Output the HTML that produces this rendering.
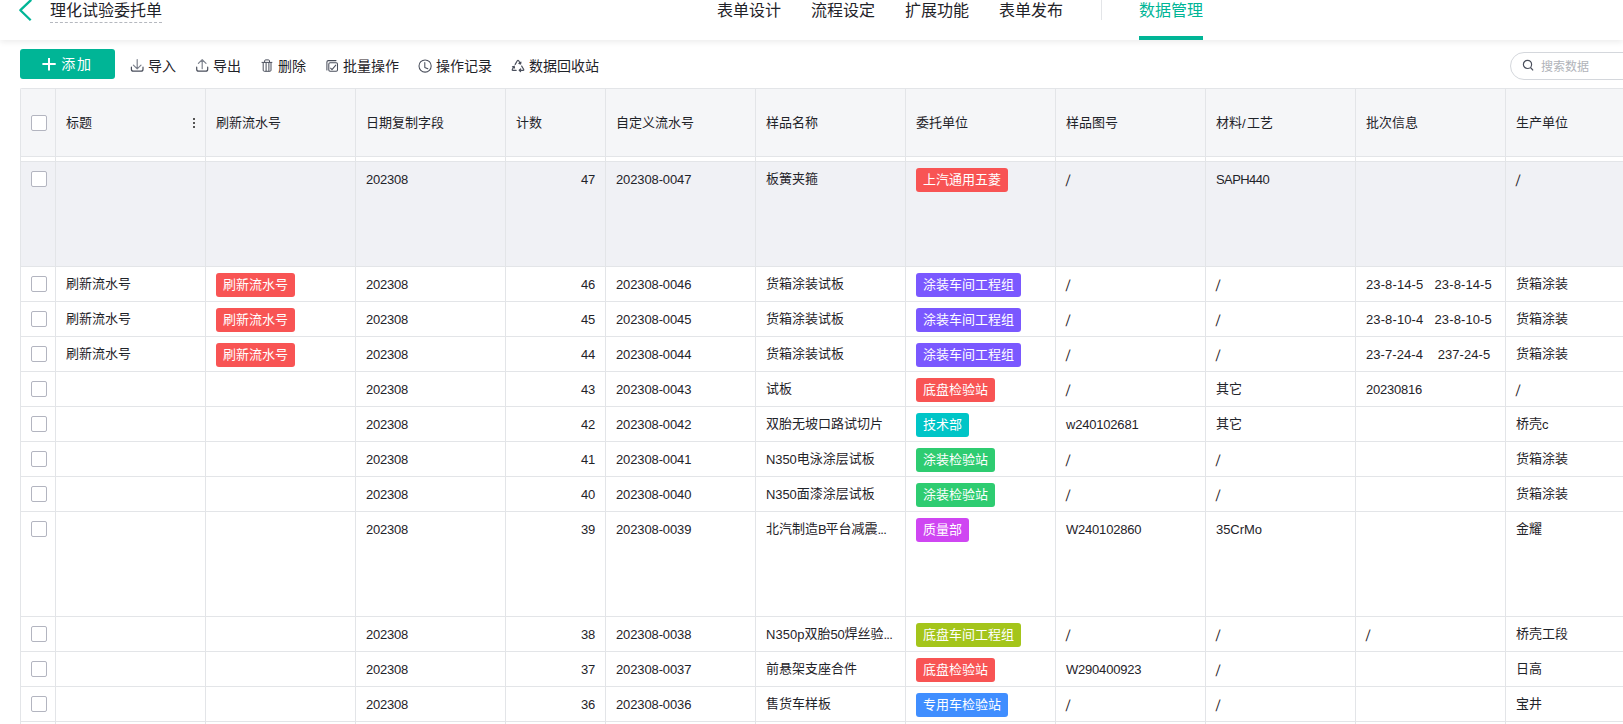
<!DOCTYPE html>
<html lang="zh-CN">
<head>
<meta charset="utf-8">
<title>理化试验委托单</title>
<style>
*{box-sizing:border-box;margin:0;padding:0}
html,body{width:1623px;height:724px;overflow:hidden;background:#fff}
body{font-family:"Liberation Sans","Noto Sans CJK SC",sans-serif;color:#1f2329;font-size:13px;position:relative}
.top{position:absolute;left:0;top:0;width:1623px;height:40px;background:#fff;box-shadow:0 2px 6px rgba(0,0,0,.08);z-index:5}
.back{position:absolute;left:18px;top:0;width:16px;height:24px}
.title{position:absolute;left:50px;top:-1px;font-size:16px;line-height:24px;height:24px;color:#1f2329;border-bottom:1px dashed #b5b8bf;white-space:nowrap}
.tabs{position:absolute;left:0;top:0}
.tab{position:absolute;top:-1px;font-size:16px;line-height:24px;white-space:nowrap;color:#1f2329}
.tab.act{color:#00b596}
.tabline{position:absolute;left:1139px;top:36px;width:64px;height:4px;background:#00b596}
.vdiv{position:absolute;left:1101px;top:0;width:1px;height:20px;background:#e3e5e8}
.bar{position:absolute;left:0;top:40px;width:1623px;height:48px}
.add{position:absolute;left:20px;top:9px;width:95px;height:30px;background:#00b596;border-radius:3px;color:#fff;font-size:14px;line-height:30px}
.add span{position:absolute;left:41.3px;top:0;font-size:14px;letter-spacing:1.6px}
.add svg{position:absolute;left:22px;top:8px;overflow:visible}
.tb{position:absolute;top:16px;height:20px;line-height:20px;font-size:14px;color:#1f2329;white-space:nowrap}
.tb svg{position:absolute;left:0;top:2px;overflow:visible}
.tb span{position:absolute;left:18px;top:0}
.search{position:absolute;left:1510px;top:12px;width:140px;height:28px;border:1px solid #d4d7dc;border-radius:14px;background:#fff}
.search svg{position:absolute;left:11px;top:6px}
.search span{position:absolute;left:30px;top:1px;line-height:26px;font-size:12px;color:#b0b3b9;white-space:nowrap}
.tblwrap{position:absolute;left:20px;top:88px;width:1620px;height:640px;border-left:1px solid #e3e5e8;border-top:1px solid #e3e5e8;overflow:hidden;border-radius:2px 0 0 0}
.r{display:flex;height:35px;border-bottom:1px solid #e3e5e8;background:#fff;white-space:nowrap}
.r.tall{height:105px}
.r.hov{background:#f0f1f5}
.r.hd{height:68px;background:#f5f6f8;color:#1f2329}
.gap{height:5px;display:flex;border-bottom:1px solid #e3e5e8;background:#fff}
.c{height:100%;border-right:1px solid #e3e5e8;padding:0 10px;line-height:34px;overflow:hidden;flex:none;position:relative}
.hd .c{line-height:67px}
.ck{width:35px;padding:0}
.w150{width:150px}
.w100{width:100px}
.num{text-align:right}
.l{position:relative;top:1px}
.sl{display:inline-block;line-height:15px;transform:skewX(-7deg) scaleY(1.23);transform-origin:0 2px;left:1px}
.cb{position:absolute;left:10px;top:9px;width:16px;height:16px;border:1px solid #b3b5c0;border-radius:2px;background:#fff}
.hd .cb{top:26px}
.tag{display:inline-block;height:24px;line-height:24px;padding:0 7px;border-radius:3px;color:#fff;font-size:13px;vertical-align:top;margin-top:6px}
.red{background:#f85454}.purple{background:#7a58ff}.cyan{background:#00c5c7}.green{background:#2ecc71}.magenta{background:#cf46f2}.lime{background:#a4c51b}.blue{background:#408eff}
.dots{position:absolute;right:9px;top:28.5px;width:3px;height:11px}
.dots b{display:block;width:2px;height:2px;background:#555;margin-bottom:2px}
</style>
</head>
<body>
<div class="top">
  <svg class="back" viewBox="0 0 16 24"><path d="M13.2 -0.2 L2.4 10.2 L12.7 20.3" fill="none" stroke="#00b596" stroke-width="2.3" stroke-linejoin="round"/></svg>
  <div class="title">理化试验委托单</div>
  <div class="tab" style="left:717px">表单设计</div>
  <div class="tab" style="left:811px">流程设定</div>
  <div class="tab" style="left:905px">扩展功能</div>
  <div class="tab" style="left:999px">表单发布</div>
  <div class="vdiv"></div>
  <div class="tab act" style="left:1139px">数据管理</div>
  <div class="tabline"></div>
</div>
<div class="bar">
  <div class="add"><svg width="14" height="14" viewBox="0 0 14 14"><path d="M7 1v12.6M0.4 7h13.3" stroke="#fff" stroke-width="2" fill="none"/></svg><span>添加</span></div>
  <div class="tb" style="left:130px"><svg width="15" height="15" viewBox="0 0 15 15"><path d="M7.2 1.6v9.2M3.4 7.1l3.8 3.8 3.8-3.8" fill="none" stroke="#7d828d" stroke-width="1.2" stroke-linecap="round" stroke-linejoin="round"/><path d="M1.4 9.2v2a2 2 0 0 0 2 2h7.6a2 2 0 0 0 2-2V9.2" fill="none" stroke="#4a4f5c" stroke-width="1.2" stroke-linecap="round" stroke-linejoin="round"/></svg><span>导入</span></div>
  <div class="tb" style="left:195px"><svg width="15" height="15" viewBox="0 0 15 15"><path d="M7.2 10.7V1.6M3.4 5.4l3.8-3.8 3.8 3.8" fill="none" stroke="#7d828d" stroke-width="1.2" stroke-linecap="round" stroke-linejoin="round"/><path d="M1.7 9.2v2a2 2 0 0 0 2 2h7a2 2 0 0 0 2-2V9.2" fill="none" stroke="#4a4f5c" stroke-width="1.2" stroke-linecap="round" stroke-linejoin="round"/></svg><span>导出</span></div>
  <div class="tb" style="left:260px"><svg width="15" height="15" viewBox="0 0 15 15"><path d="M1.6 4.4h10.7M4.6 4.2V3a1.1 1.1 0 0 1 1.1-1.1h2.7A1.1 1.1 0 0 1 9.5 3v1.2M3.2 4.6v7.6a1.1 1.1 0 0 0 1.1 1.1h5.6a1.1 1.1 0 0 0 1.1-1.1V4.6M6.1 4.6v8.6M8.9 4.6v8.6" fill="none" stroke="#4a4f5c" stroke-width="1" stroke-linejoin="round"/></svg><span>删除</span></div>
  <div class="tb" style="left:325px"><svg width="15" height="15" viewBox="0 0 15 15"><path d="M11 2.6H3.4A1.5 1.5 0 0 0 1.9 4.1V12" fill="none" stroke="#4a4f5c" stroke-width="1.05" stroke-linecap="round" stroke-linejoin="round"/><rect x="3.8" y="4.8" width="8.7" height="8.5" rx="1.3" fill="none" stroke="#4a4f5c" stroke-width="1.05" stroke-linecap="round" stroke-linejoin="round"/><path d="M5.6 10.2l1.4 1.4 3.8-4.5" fill="none" stroke="#4a4f5c" stroke-width="1.05" stroke-linecap="round" stroke-linejoin="round"/></svg><span>批量操作</span></div>
  <div class="tb" style="left:418px"><svg width="15" height="15" viewBox="0 0 15 15"><circle cx="7.1" cy="8" r="6.1" fill="none" stroke="#4a4f5c" stroke-width="1.05" stroke-linecap="round" stroke-linejoin="round"/><path d="M6.8 4.4v5l3 1.4" fill="none" stroke="#4a4f5c" stroke-width="1.05" stroke-linecap="round" stroke-linejoin="round"/></svg><span>操作记录</span></div>
  <div class="tb" style="left:511px"><svg width="15" height="15" viewBox="0 0 15 15"><path d="M4.2 6.4L6.3 2.8Q7 1.7 7.7 2.8L9.6 6M9.9 4.2L9.6 6 7.9 5.4" fill="none" stroke="#4a4f5c" stroke-width="1.2" stroke-linecap="round" stroke-linejoin="round"/><path d="M10.7 8.1l1.9 3.2Q13.3 12.3 12.1 12.3H8.2M9.6 11L8.2 12.3l1.4 1.3" fill="none" stroke="#4a4f5c" stroke-width="1.2" stroke-linecap="round" stroke-linejoin="round"/><path d="M5.2 12.3H1.9Q.7 12.3 1.4 11.2L3.2 8.2M1.5 8.8l1.7-.6.3 1.8" fill="none" stroke="#4a4f5c" stroke-width="1.2" stroke-linecap="round" stroke-linejoin="round"/></svg><span>数据回收站</span></div>
  <div class="search"><svg width="13" height="13" viewBox="0 0 13 13"><circle cx="5.5" cy="5.4" r="4.1" fill="none" stroke="#4a4f5c" stroke-width="1.2"/><path d="M8.5 8.5l2.6 2.8" stroke="#4a4f5c" stroke-width="1.2"/></svg><span>搜索数据</span></div>
</div>
<div class="tblwrap">
<div class="r hd"><div class="c ck"><i class="cb"></i></div><div class="c w150">标题<span class="dots"><b></b><b></b><b></b></span></div><div class="c w150">刷新流水号</div><div class="c w150">日期复制字段</div><div class="c w100">计数</div><div class="c w150">自定义流水号</div><div class="c w150">样品名称</div><div class="c w150">委托单位</div><div class="c w150">样品图号</div><div class="c w150">材料<span class="l" style="letter-spacing:1.46px">/</span>工艺</div><div class="c w150">批次信息</div><div class="c w150">生产单位</div><div class="c w150">检测项目</div></div>
<div class="gap"><div class="c ck"></div><div class="c w150"></div><div class="c w150"></div><div class="c w150"></div><div class="c w100"></div><div class="c w150"></div><div class="c w150"></div><div class="c w150"></div><div class="c w150"></div><div class="c w150"></div><div class="c w150"></div><div class="c w150"></div></div>
<div class="r tall hov"><div class="c ck"><i class="cb"></i></div><div class="c w150"></div><div class="c w150"></div><div class="c w150"><span class="l" style="letter-spacing:-0.22px">202308</span></div><div class="c w100 num"><span class="l" style="letter-spacing:-0.22px">47</span></div><div class="c w150"><span class="l" style="letter-spacing:-0.12px">202308-0047</span></div><div class="c w150">板簧夹箍</div><div class="c w150"><span class="tag red">上汽通用五菱</span></div><div class="c w150"><span class="l sl">/</span></div><div class="c w150"><span class="l" style="letter-spacing:-0.58px">SAPH440</span></div><div class="c w150"></div><div class="c w150"><span class="l sl">/</span></div></div>
<div class="r"><div class="c ck"><i class="cb"></i></div><div class="c w150">刷新流水号</div><div class="c w150"><span class="tag red">刷新流水号</span></div><div class="c w150"><span class="l" style="letter-spacing:-0.22px">202308</span></div><div class="c w100 num"><span class="l" style="letter-spacing:-0.22px">46</span></div><div class="c w150"><span class="l" style="letter-spacing:-0.12px">202308-0046</span></div><div class="c w150">货箱涂装试板</div><div class="c w150"><span class="tag purple">涂装车间工程组</span></div><div class="c w150"><span class="l sl">/</span></div><div class="c w150"><span class="l sl">/</span></div><div class="c w150"><span class="l" style="letter-spacing:0.11px">23-8-14-5&nbsp;&nbsp; 23-8-14-5</span></div><div class="c w150">货箱涂装</div></div>
<div class="r"><div class="c ck"><i class="cb"></i></div><div class="c w150">刷新流水号</div><div class="c w150"><span class="tag red">刷新流水号</span></div><div class="c w150"><span class="l" style="letter-spacing:-0.22px">202308</span></div><div class="c w100 num"><span class="l" style="letter-spacing:-0.22px">45</span></div><div class="c w150"><span class="l" style="letter-spacing:-0.12px">202308-0045</span></div><div class="c w150">货箱涂装试板</div><div class="c w150"><span class="tag purple">涂装车间工程组</span></div><div class="c w150"><span class="l sl">/</span></div><div class="c w150"><span class="l sl">/</span></div><div class="c w150"><span class="l" style="letter-spacing:0.11px">23-8-10-4&nbsp;&nbsp; 23-8-10-5</span></div><div class="c w150">货箱涂装</div></div>
<div class="r"><div class="c ck"><i class="cb"></i></div><div class="c w150">刷新流水号</div><div class="c w150"><span class="tag red">刷新流水号</span></div><div class="c w150"><span class="l" style="letter-spacing:-0.22px">202308</span></div><div class="c w100 num"><span class="l" style="letter-spacing:-0.22px">44</span></div><div class="c w150"><span class="l" style="letter-spacing:-0.12px">202308-0044</span></div><div class="c w150">货箱涂装试板</div><div class="c w150"><span class="tag purple">涂装车间工程组</span></div><div class="c w150"><span class="l sl">/</span></div><div class="c w150"><span class="l sl">/</span></div><div class="c w150"><span class="l" style="letter-spacing:0.07px">23-7-24-4&nbsp;&nbsp;&nbsp; 237-24-5</span></div><div class="c w150">货箱涂装</div></div>
<div class="r"><div class="c ck"><i class="cb"></i></div><div class="c w150"></div><div class="c w150"></div><div class="c w150"><span class="l" style="letter-spacing:-0.22px">202308</span></div><div class="c w100 num"><span class="l" style="letter-spacing:-0.22px">43</span></div><div class="c w150"><span class="l" style="letter-spacing:-0.12px">202308-0043</span></div><div class="c w150">试板</div><div class="c w150"><span class="tag red">底盘检验站</span></div><div class="c w150"><span class="l sl">/</span></div><div class="c w150">其它</div><div class="c w150"><span class="l" style="letter-spacing:-0.22px">20230816</span></div><div class="c w150"><span class="l sl">/</span></div></div>
<div class="r"><div class="c ck"><i class="cb"></i></div><div class="c w150"></div><div class="c w150"></div><div class="c w150"><span class="l" style="letter-spacing:-0.22px">202308</span></div><div class="c w100 num"><span class="l" style="letter-spacing:-0.22px">42</span></div><div class="c w150"><span class="l" style="letter-spacing:-0.12px">202308-0042</span></div><div class="c w150">双胎无坡口路试切片</div><div class="c w150"><span class="tag cyan">技术部</span></div><div class="c w150"><span class="l" style="letter-spacing:-0.20px">w240102681</span></div><div class="c w150">其它</div><div class="c w150"></div><div class="c w150">桥壳<span class="l" style="letter-spacing:-0.49px">c</span></div></div>
<div class="r"><div class="c ck"><i class="cb"></i></div><div class="c w150"></div><div class="c w150"></div><div class="c w150"><span class="l" style="letter-spacing:-0.22px">202308</span></div><div class="c w100 num"><span class="l" style="letter-spacing:-0.22px">41</span></div><div class="c w150"><span class="l" style="letter-spacing:-0.12px">202308-0041</span></div><div class="c w150"><span class="l" style="letter-spacing:-0.08px">N350</span>电泳涂层试板</div><div class="c w150"><span class="tag green">涂装检验站</span></div><div class="c w150"><span class="l sl">/</span></div><div class="c w150"><span class="l sl">/</span></div><div class="c w150"></div><div class="c w150">货箱涂装</div></div>
<div class="r"><div class="c ck"><i class="cb"></i></div><div class="c w150"></div><div class="c w150"></div><div class="c w150"><span class="l" style="letter-spacing:-0.22px">202308</span></div><div class="c w100 num"><span class="l" style="letter-spacing:-0.22px">40</span></div><div class="c w150"><span class="l" style="letter-spacing:-0.12px">202308-0040</span></div><div class="c w150"><span class="l" style="letter-spacing:-0.08px">N350</span>面漆涂层试板</div><div class="c w150"><span class="tag green">涂装检验站</span></div><div class="c w150"><span class="l sl">/</span></div><div class="c w150"><span class="l sl">/</span></div><div class="c w150"></div><div class="c w150">货箱涂装</div></div>
<div class="r tall"><div class="c ck"><i class="cb"></i></div><div class="c w150"></div><div class="c w150"></div><div class="c w150"><span class="l" style="letter-spacing:-0.22px">202308</span></div><div class="c w100 num"><span class="l" style="letter-spacing:-0.22px">39</span></div><div class="c w150"><span class="l" style="letter-spacing:-0.12px">202308-0039</span></div><div class="c w150">北汽制造<span class="l" style="letter-spacing:-1.22px">B</span>平台减震<span class="l" style="letter-spacing:-0.79px">...</span></div><div class="c w150"><span class="tag magenta">质量部</span></div><div class="c w150"><span class="l" style="letter-spacing:-0.21px">W240102860</span></div><div class="c w150"><span class="l" style="letter-spacing:-0.06px">35CrMo</span></div><div class="c w150"></div><div class="c w150">金耀</div></div>
<div class="r"><div class="c ck"><i class="cb"></i></div><div class="c w150"></div><div class="c w150"></div><div class="c w150"><span class="l" style="letter-spacing:-0.22px">202308</span></div><div class="c w100 num"><span class="l" style="letter-spacing:-0.22px">38</span></div><div class="c w150"><span class="l" style="letter-spacing:-0.12px">202308-0038</span></div><div class="c w150"><span class="l" style="letter-spacing:0.02px">N350p</span>双胎<span class="l" style="letter-spacing:-0.22px">50</span>焊丝验<span class="l" style="letter-spacing:-0.79px">...</span></div><div class="c w150"><span class="tag lime">底盘车间工程组</span></div><div class="c w150"><span class="l sl">/</span></div><div class="c w150"><span class="l sl">/</span></div><div class="c w150"><span class="l sl">/</span></div><div class="c w150">桥壳工段</div></div>
<div class="r"><div class="c ck"><i class="cb"></i></div><div class="c w150"></div><div class="c w150"></div><div class="c w150"><span class="l" style="letter-spacing:-0.22px">202308</span></div><div class="c w100 num"><span class="l" style="letter-spacing:-0.22px">37</span></div><div class="c w150"><span class="l" style="letter-spacing:-0.12px">202308-0037</span></div><div class="c w150">前悬架支座合件</div><div class="c w150"><span class="tag red">底盘检验站</span></div><div class="c w150"><span class="l" style="letter-spacing:-0.21px">W290400923</span></div><div class="c w150"><span class="l sl">/</span></div><div class="c w150"></div><div class="c w150">日高</div></div>
<div class="r"><div class="c ck"><i class="cb"></i></div><div class="c w150"></div><div class="c w150"></div><div class="c w150"><span class="l" style="letter-spacing:-0.22px">202308</span></div><div class="c w100 num"><span class="l" style="letter-spacing:-0.22px">36</span></div><div class="c w150"><span class="l" style="letter-spacing:-0.12px">202308-0036</span></div><div class="c w150">售货车样板</div><div class="c w150"><span class="tag blue">专用车检验站</span></div><div class="c w150"><span class="l sl">/</span></div><div class="c w150"><span class="l sl">/</span></div><div class="c w150"></div><div class="c w150">宝井</div></div>
<div class="r"><div class="c ck"><i class="cb"></i></div><div class="c w150"></div><div class="c w150"></div><div class="c w150"><span class="l" style="letter-spacing:-0.22px">202308</span></div><div class="c w100 num"><span class="l" style="letter-spacing:-0.22px">35</span></div><div class="c w150"><span class="l" style="letter-spacing:-0.12px">202308-0035</span></div><div class="c w150"></div><div class="c w150"></div><div class="c w150"></div><div class="c w150"></div><div class="c w150"></div><div class="c w150"></div></div>
</div>
</body>
</html>
